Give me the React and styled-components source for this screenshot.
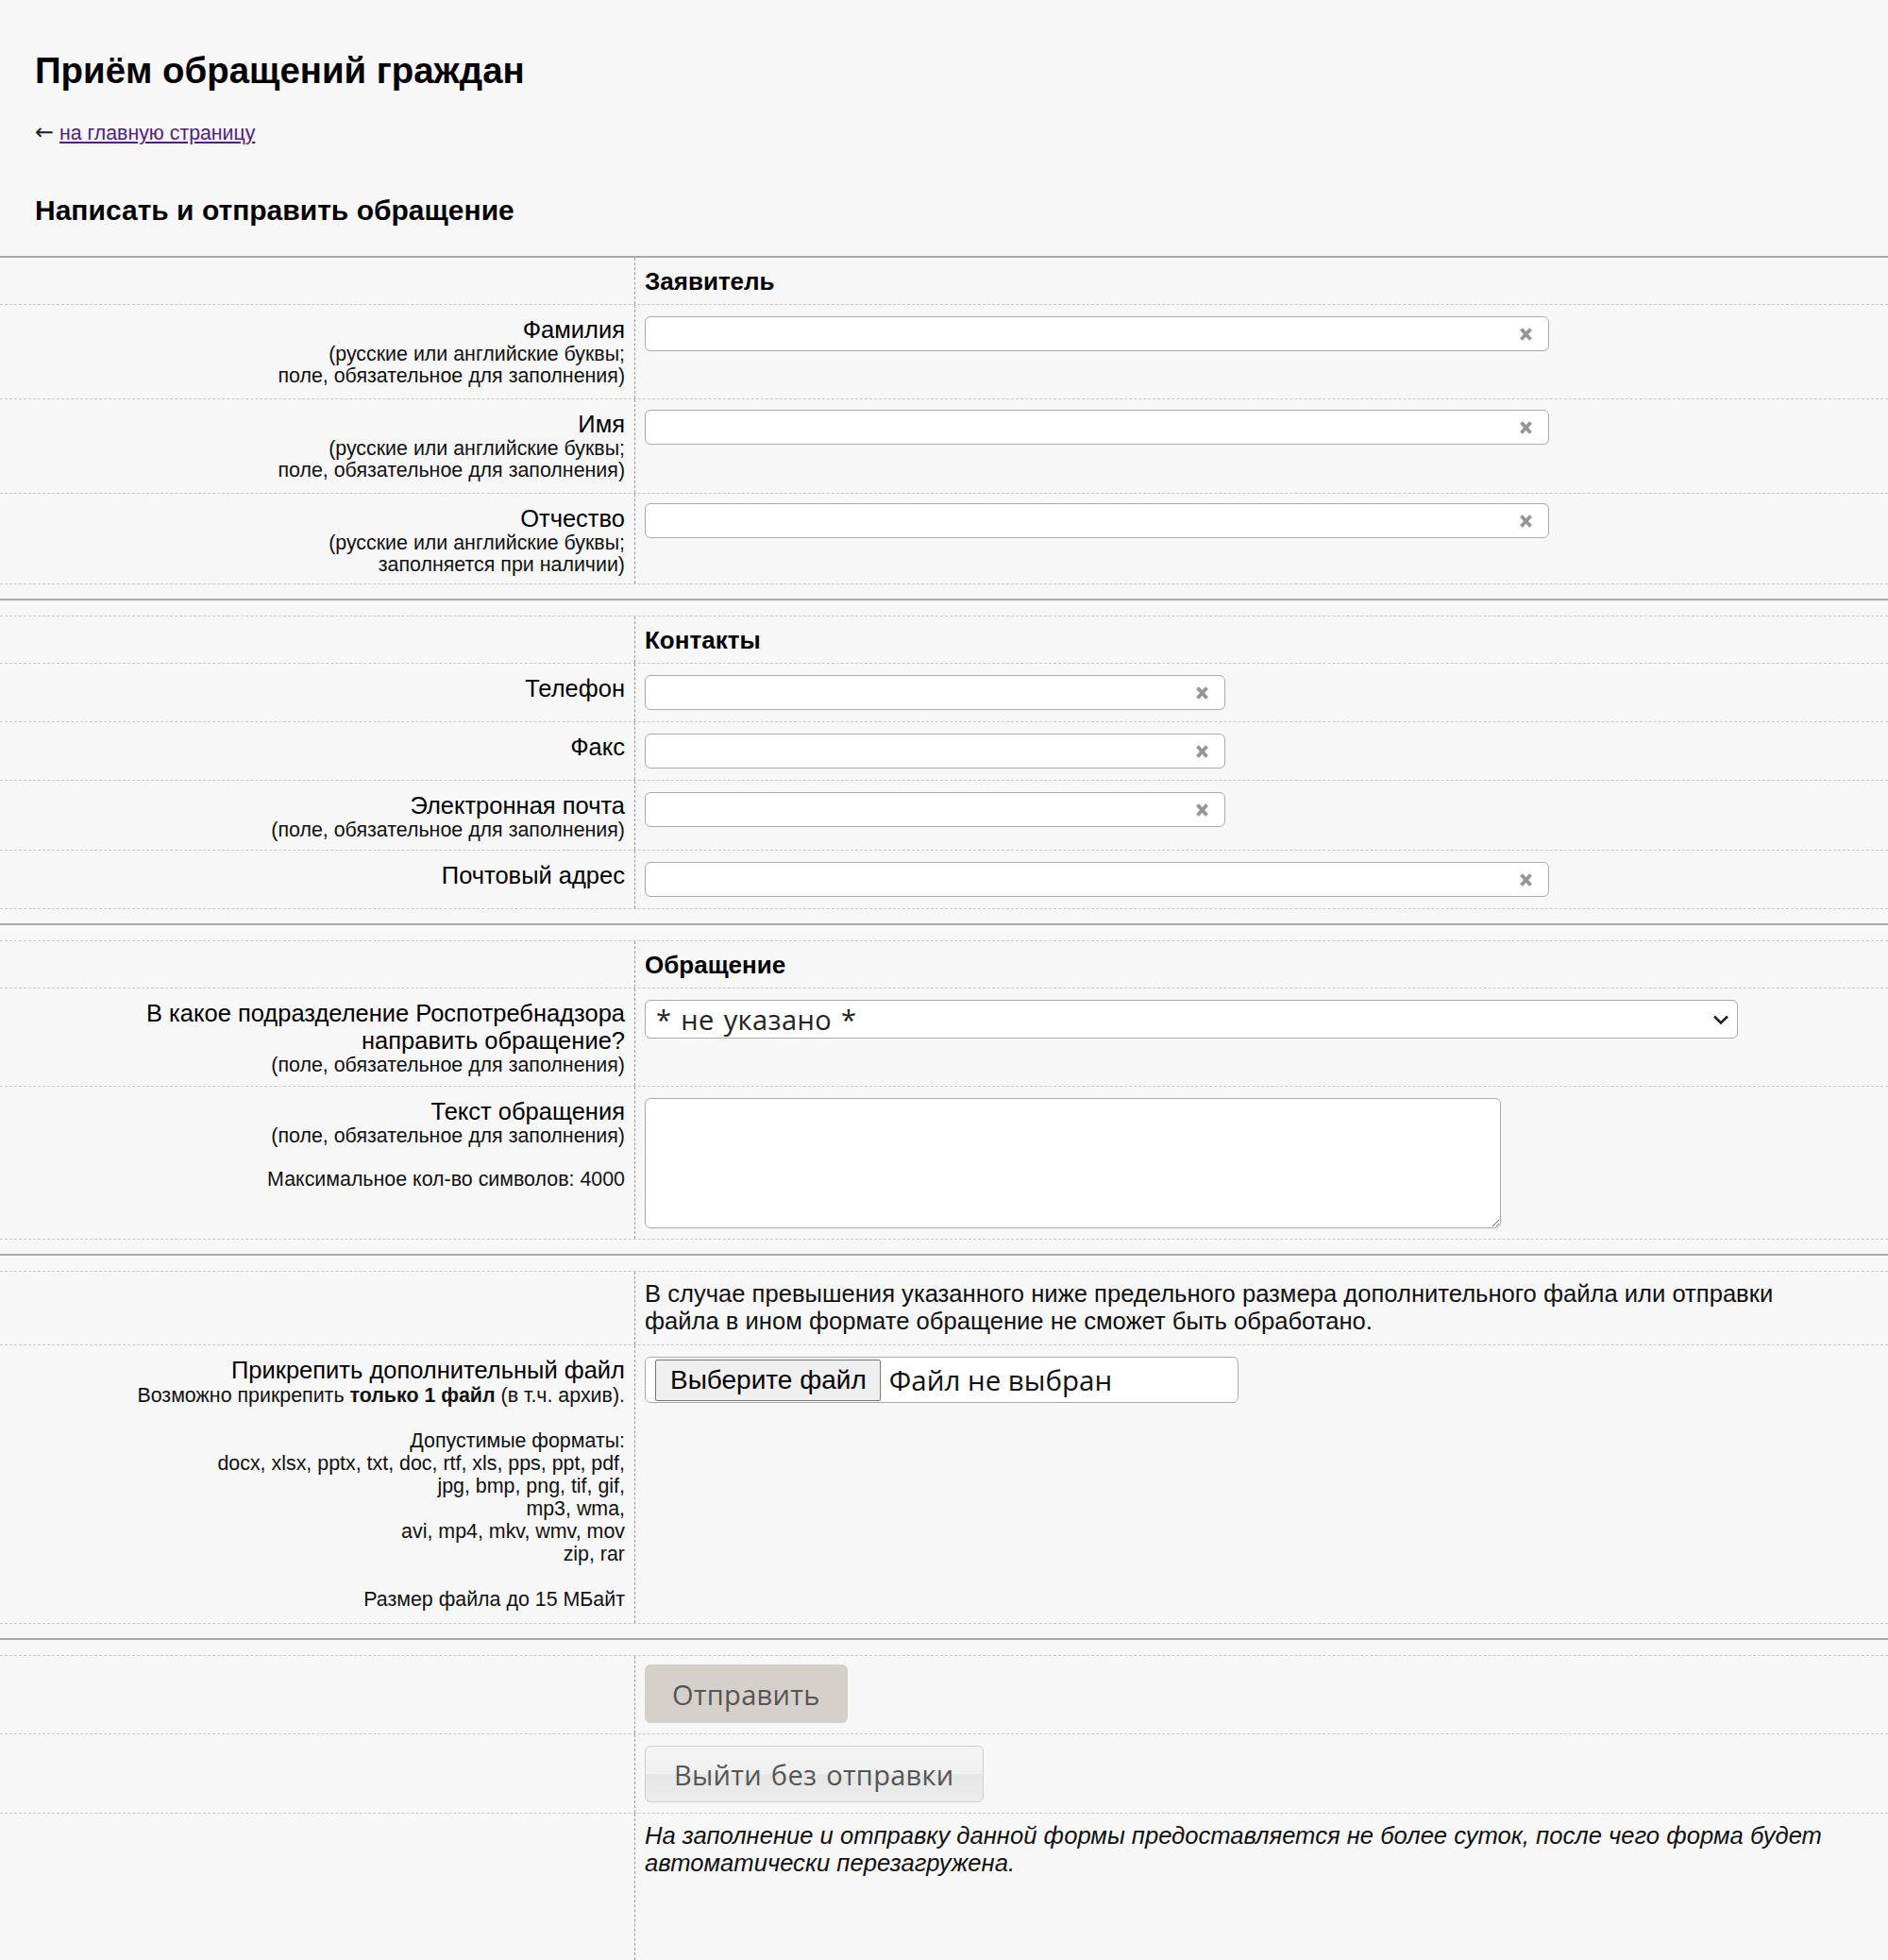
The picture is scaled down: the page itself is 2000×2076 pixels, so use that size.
import React from "react";
import styled, { createGlobalStyle } from "styled-components";

const GlobalStyle = createGlobalStyle`
  html, body {
    margin: 0;
    padding: 0;
    background: #f7f7f7;
  }
  body {
    font-family: "Liberation Sans", Arial, sans-serif;
    color: #000;
  }
  #root {
    min-height: 100vh;
    display: flex;
    flex-direction: column;
  }
  * {
    box-sizing: border-box;
  }
`;

const Page = styled.div`
  flex: 1;
  display: flex;
  flex-direction: column;
`;

const Header = styled.header`
  padding: 53px 37px 31px;
`;

const Title = styled.h1`
  margin: 0;
  font-size: 38.4px;
  line-height: 44px;
  font-weight: bold;
`;

const BackLine = styled.p`
  margin: 32px 0 0;
  font-size: 21.3px;
  line-height: 24px;
`;

const Arrow = styled.span`
  font-family: "DejaVu Sans", sans-serif;
  font-size: 24px;
  line-height: 20px;
  color: #222;
`;

const BackLink = styled.a`
  color: #551a8b;
  text-decoration: underline;
`;

const Subtitle = styled.h2`
  margin: 52px 0 0;
  font-size: 30px;
  line-height: 35px;
  font-weight: bold;
`;

const Divider = styled.hr`
  border: 0;
  height: 2px;
  background: #a9a9a9;
  margin: ${(p) => (p.$first ? "0" : "15px 0 16px")};
`;

const Section = styled.section`
  border-top: ${(p) => (p.$first ? "none" : "1px dashed #c8c8c8")};
  ${(p) => p.$grow && "flex: 1; display: flex; flex-direction: column;"}
`;

const Row = styled.div`
  display: grid;
  grid-template-columns: 673px 1fr;
  border-bottom: ${(p) => (p.$last ? "none" : "1px dashed #c8c8c8")};
  ${(p) => p.$last && "flex: 1;"}
`;

const Label = styled.div`
  text-align: right;
  padding: 12px 10px ${(p) => p.$pb ?? 12}px 0;
  border-right: 1px dashed #9a9a9a;
`;

const LabelMain = styled.span`
  display: block;
  font-size: 25.5px;
  line-height: 29px;
`;

const Hint = styled.span`
  display: block;
  font-size: 21.4px;
  line-height: ${(p) => p.$lh ?? 23}px;
  color: #111;
  min-height: ${(p) => p.$lh ?? 23}px;
`;

const Field = styled.div`
  padding: ${(p) => p.$pt ?? 12}px 10px ${(p) => p.$pb ?? 12}px;
`;

const SectionTitle = styled.div`
  font-size: 26px;
  line-height: 30px;
  font-weight: bold;
`;

const InputWrap = styled.div`
  position: relative;
  width: ${(p) => p.$w}px;
`;

const TextInput = styled.input`
  width: 100%;
  height: 37px;
  border: 1px solid #ababab;
  border-radius: 6px;
  background: #fff;
  padding: 0 40px 0 10px;
  font-family: inherit;
  font-size: 21px;
  outline: none;
`;

const ClearIcon = styled.span`
  position: absolute;
  right: 16px;
  top: 50%;
  transform: translateY(-50%);
  display: flex;
`;

const SelectWrap = styled.div`
  position: relative;
  width: 1158px;
`;

const Select = styled.select`
  width: 100%;
  height: 41px;
  appearance: none;
  -webkit-appearance: none;
  border: 1px solid #ababab;
  border-radius: 6px;
  background: #fff;
  padding: 0 40px 0 11px;
  font-family: "Open Sans", sans-serif;
  font-size: 29px;
  letter-spacing: 0.4px;
  word-spacing: 2px;
  color: #222;
  outline: none;
`;

const Chevron = styled.span`
  position: absolute;
  right: 9px;
  top: 50%;
  transform: translateY(-50%);
  display: flex;
  pointer-events: none;
`;

const TextArea = styled.textarea`
  display: block;
  width: 907px;
  height: 138px;
  border: 1px solid #ababab;
  border-radius: 6px;
  background: #fff;
  font-family: inherit;
  font-size: 21px;
  outline: none;
`;

const Notice = styled.p`
  margin: 0;
  font-size: 25.6px;
  line-height: 29px;
  color: #111;
  font-style: ${(p) => (p.$italic ? "italic" : "normal")};
  max-width: ${(p) => (p.$italic ? 1300 : 1240)}px;
`;

const FileBox = styled.div`
  display: flex;
  align-items: center;
  gap: 9px;
  width: 629px;
  height: 49px;
  padding: 0 10px;
  border: 1px solid #ababab;
  border-radius: 6px;
  background: #fff;
`;

const FileButton = styled.span`
  display: flex;
  align-items: center;
  height: 44px;
  padding: 0 14px 0 15px;
  border: 1px solid #777;
  border-radius: 2px;
  background: #efefef;
  font-size: 28px;
  color: #000;
`;

const FileText = styled.span`
  font-family: "Open Sans", sans-serif;
  font-size: 29.5px;
  color: #111;
`;

const Button = styled.button`
  height: ${(p) => (p.$primary ? 62 : 60)}px;
  padding: 0 ${(p) => (p.$primary ? 28 : 30)}px;
  border: 1px solid ${(p) => (p.$primary ? "#d3cfc8" : "#cfcfcf")};
  border-radius: 6px;
  background: ${(p) =>
    p.$primary ? "#d5d1ca" : "linear-gradient(#f4f4f4 0%, #f0f0f0 50%, #e6e6e6 51%, #ececec 100%)"};
  font-family: "Open Sans", sans-serif;
  font-size: 29px;
  letter-spacing: 0.3px;
  word-spacing: 2px;
  color: #555;
  cursor: pointer;
`;

const XIcon = () => (
  <svg width="17" height="16" viewBox="0 0 17 16">
    <path d="M3.5 2.5 L13.5 13.5 M13.5 2.5 L3.5 13.5" stroke="#959595" strokeWidth="3.8" strokeLinecap="butt" />
  </svg>
);

const ClearableInput = ({ width }) => (
  <InputWrap $w={width}>
    <TextInput type="text" />
    <ClearIcon>
      <XIcon />
    </ClearIcon>
  </InputWrap>
);

const SectionHead = ({ children }) => (
  <Row>
    <Label />
    <Field $pt={10} $pb={9}>
      <SectionTitle>{children}</SectionTitle>
    </Field>
  </Row>
);

export default function App() {
  return (
    <Page>
      <GlobalStyle />
      <Header>
        <Title>Приём обращений граждан</Title>
        <BackLine>
          <Arrow>←</Arrow> <BackLink href="#">на главную страницу</BackLink>
        </BackLine>
        <Subtitle>Написать и отправить обращение</Subtitle>
      </Header>

      <Divider $first />
      <Section $first>
        <SectionHead>Заявитель</SectionHead>
        <Row>
          <Label>
            <LabelMain>Фамилия</LabelMain>
            <Hint>(русские или английские буквы;</Hint>
            <Hint>поле, обязательное для заполнения)</Hint>
          </Label>
          <Field>
            <ClearableInput width={958} />
          </Field>
        </Row>
        <Row>
          <Label>
            <LabelMain>Имя</LabelMain>
            <Hint>(русские или английские буквы;</Hint>
            <Hint>поле, обязательное для заполнения)</Hint>
          </Label>
          <Field $pt={11}>
            <ClearableInput width={958} />
          </Field>
        </Row>
        <Row>
          <Label $pb={8}>
            <LabelMain>Отчество</LabelMain>
            <Hint>(русские или английские буквы;</Hint>
            <Hint>заполняется при наличии)</Hint>
          </Label>
          <Field $pt={10}>
            <ClearableInput width={958} />
          </Field>
        </Row>
      </Section>

      <Divider />
      <Section>
        <SectionHead>Контакты</SectionHead>
        <Row>
          <Label>
            <LabelMain>Телефон</LabelMain>
          </Label>
          <Field>
            <ClearableInput width={615} />
          </Field>
        </Row>
        <Row>
          <Label>
            <LabelMain>Факс</LabelMain>
          </Label>
          <Field>
            <ClearableInput width={615} />
          </Field>
        </Row>
        <Row>
          <Label $pb={9}>
            <LabelMain>Электронная почта</LabelMain>
            <Hint>(поле, обязательное для заполнения)</Hint>
          </Label>
          <Field>
            <ClearableInput width={615} />
          </Field>
        </Row>
        <Row>
          <Label>
            <LabelMain>Почтовый адрес</LabelMain>
          </Label>
          <Field>
            <ClearableInput width={958} />
          </Field>
        </Row>
      </Section>

      <Divider />
      <Section>
        <SectionHead>Обращение</SectionHead>
        <Row>
          <Label $pb={10}>
            <LabelMain>
              В какое подразделение Роспотребнадзора
              <br />
              направить обращение?
            </LabelMain>
            <Hint>(поле, обязательное для заполнения)</Hint>
          </Label>
          <Field>
            <SelectWrap>
              <Select defaultValue="0">
                <option value="0">* не указано *</option>
              </Select>
              <Chevron>
                <svg width="18" height="11" viewBox="0 0 18 11">
                  <polyline points="2,2 9,9 16,2" fill="none" stroke="#222" strokeWidth="2.6" />
                </svg>
              </Chevron>
            </SelectWrap>
          </Field>
        </Row>
        <Row>
          <Label $pb={11}>
            <LabelMain>Текст обращения</LabelMain>
            <Hint>(поле, обязательное для заполнения)</Hint>
            <Hint />
            <Hint>Максимальное кол-во символов: 4000</Hint>
          </Label>
          <Field $pb={11}>
            <TextArea />
          </Field>
        </Row>
      </Section>

      <Divider />
      <Section>
        <Row>
          <Label />
          <Field $pt={9} $pb={10}>
            <Notice>
              В случае превышения указанного ниже предельного размера дополнительного файла или отправки
              файла в ином формате обращение не сможет быть обработано.
            </Notice>
          </Field>
        </Row>
        <Row>
          <Label $pb={13}>
            <LabelMain>Прикрепить дополнительный файл</LabelMain>
            <Hint $lh={24}>
              Возможно прикрепить <b>только 1 файл</b> (в т.ч. архив).
            </Hint>
            <Hint $lh={24} />
            <Hint $lh={24}>Допустимые форматы:</Hint>
            <Hint $lh={24}>docx, xlsx, pptx, txt, doc, rtf, xls, pps, ppt, pdf,</Hint>
            <Hint $lh={24}>jpg, bmp, png, tif, gif,</Hint>
            <Hint $lh={24}>mp3, wma,</Hint>
            <Hint $lh={24}>avi, mp4, mkv, wmv, mov</Hint>
            <Hint $lh={24}>zip, rar</Hint>
            <Hint $lh={24} />
            <Hint $lh={24}>Размер файла до 15 МБайт</Hint>
          </Label>
          <Field>
            <FileBox>
              <FileButton>Выберите файл</FileButton>
              <FileText>Файл не выбран</FileText>
            </FileBox>
          </Field>
        </Row>
      </Section>

      <Divider />
      <Section $grow>
        <Row>
          <Label />
          <Field $pt={9} $pb={11}>
            <Button $primary type="button">Отправить</Button>
          </Field>
        </Row>
        <Row>
          <Label />
          <Field $pt={12} $pb={11}>
            <Button type="button">Выйти без отправки</Button>
          </Field>
        </Row>
        <Row $last>
          <Label />
          <Field $pt={9} $pb={20}>
            <Notice $italic>
              На заполнение и отправку данной формы предоставляется не более суток, после чего форма будет
              автоматически перезагружена.
            </Notice>
          </Field>
        </Row>
      </Section>
    </Page>
  );
}
